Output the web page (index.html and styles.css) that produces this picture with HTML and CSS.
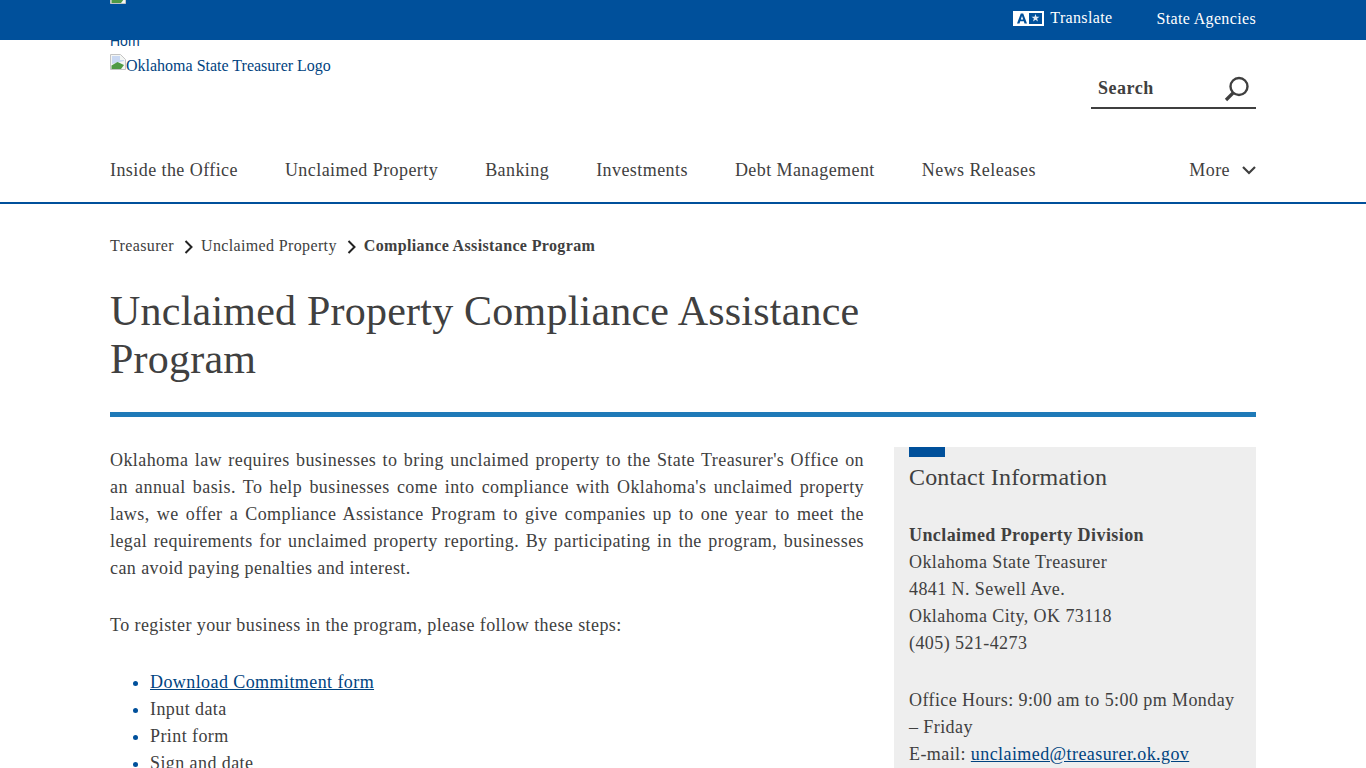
FILE: index.html
```html
<!DOCTYPE html>
<html lang="en">
<head>
<meta charset="utf-8">
<title>Unclaimed Property Compliance Assistance Program</title>
<link rel="stylesheet" href="styles.css">
</head>
<body>
<div class="page">
  <div class="topbar">
    <div class="wrap topbar-in">
      <svg class="broken top-broken" viewBox="0 0 16 16"><path d="M.5.5h10l5 5v10H.5z" fill="#f4f6f4" stroke="#c4c4c4"/><path d="M2 2h8v4h4v1L2 10z" fill="#c9d8f2"/><path d="M1.500 15v-3.500l6-3.500 6.500 3-3 4z" fill="#4f9a45"/></svg>
      <div class="top-links">
        <a class="tl translate" href="#">
          <svg class="t-icon" viewBox="0 0 31 15"><path d="M0 0h31v15H0z" fill="#fff"/><path d="M16 2h13v11H16z" fill="#00509b"/><path d="M4 12.500l3.800-10h2.400l3.800 10h-2.500l-.7-2.200H7.200l-.7 2.200zM7.800 8.500h2.400L9 5z" fill="#00509b"/><path d="M22.500 3l1 2.700h3l-2.400 1.800.9 3-2.500-1.800-2.500 1.800.9-3-2.400-1.800h3z" fill="#dfe8f3"/></svg>
          <span>Translate</span>
        </a>
        <a class="tl agencies" href="#">State Agencies</a>
      </div>
    </div>
  </div>
  <header class="wrap masthead">
    <a class="home" href="#">Home</a>
    <div class="brand-row">
      <a class="logo" href="#"><svg class="broken logo-broken" viewBox="0 0 16 16"><path d="M.5.5h10l5 5v10H.5z" fill="#f4f6f4" stroke="#c4c4c4"/><path d="M2 2h8v4h4v1L2 10z" fill="#c9d8f2"/><path d="M1.500 15v-3.500l6-3.500 6.500 3-3 4z" fill="#4f9a45"/></svg>Oklahoma State Treasurer Logo</a>
      <div class="search">
        <span>Search</span>
        <svg class="search-icon" viewBox="0 0 26 26"><circle cx="15" cy="10.500" r="8.500" fill="none" stroke="#3f3f3f" stroke-width="2.400"/><path d="M9 17l-7 7" stroke="#3f3f3f" stroke-width="3.200" fill="none"/></svg>
      </div>
    </div>
  </header>
  <nav class="mainnav">
    <div class="wrap nav-in">
      <a href="#">Inside the Office</a>
      <a href="#">Unclaimed Property</a>
      <a href="#">Banking</a>
      <a href="#">Investments</a>
      <a href="#">Debt Management</a>
      <a href="#">News Releases</a>
      <a class="more" href="#">More <svg class="more-icon" viewBox="0 0 14 9"><path d="M1 1l6 6 6-6" fill="none" stroke="#3f3f3f" stroke-width="2.200"/></svg></a>
    </div>
  </nav>
  <main class="wrap">
    <div class="crumbs">
      <a href="#">Treasurer</a>
      <svg class="chev" viewBox="0 0 9 14"><path d="M1.500 1l6 6-6 6" fill="none" stroke="#222" stroke-width="2"/></svg>
      <a href="#">Unclaimed Property</a>
      <svg class="chev" viewBox="0 0 9 14"><path d="M1.500 1l6 6-6 6" fill="none" stroke="#222" stroke-width="2"/></svg>
      <b>Compliance Assistance Program</b>
    </div>
    <h1>Unclaimed Property Compliance Assistance Program</h1>
    <div class="columns">
      <article class="body-col">
        <p>Oklahoma law requires businesses to bring unclaimed property to the State Treasurer's Office on an annual basis. To help businesses come into compliance with Oklahoma's unclaimed property laws, we offer a Compliance Assistance Program to give companies up to one year to meet the legal requirements for unclaimed property reporting. By participating in the program, businesses can avoid paying penalties and interest.</p>
        <p>To register your business in the program, please follow these steps:</p>
        <ul>
          <li><a href="#">Download Commitment form</a></li>
          <li>Input data</li>
          <li>Print form</li>
          <li>Sign and date</li>
        </ul>
      </article>
      <aside class="contact">
        <div class="tab"></div>
        <h2>Contact Information</h2>
        <p><b>Unclaimed Property Division</b><br>Oklahoma State Treasurer<br>4841 N. Sewell Ave.<br>Oklahoma City, OK 73118<br>(405) 521-4273</p>
        <p>Office Hours: 9:00 am to 5:00 pm Monday – Friday<br>E-mail: <a href="#">unclaimed@treasurer.ok.gov</a></p>
      </aside>
    </div>
  </main>
</div>
</body>
</html>
```
FILE: styles.css
```css
* { box-sizing: border-box; }
html, body { margin: 0; padding: 0; }
body {
  font-family: "Liberation Serif", "Times New Roman", serif;
  font-size: 18px;
  line-height: 27px;
  color: #404040;
  letter-spacing: .42px;
  background: #fff;
}
a { color: #00437f; }
.page { height: 768px; overflow: hidden; }
.wrap { width: 1146px; margin: 0 auto; }
.topbar { height: 40px; background: #00509b; position: relative; z-index: 2; }
.topbar-in { display: flex; justify-content: space-between; height: 40px; }
.broken { width: 16px; height: 16px; display: inline-block; }
.top-broken { margin-top: -12px; }
.top-links { display: flex; align-items: flex-start; padding-top: 4px; }
.tl { color: #fff; text-decoration: none; font-size: 16px; letter-spacing: .35px; line-height: 27px; }
.translate { display: flex; align-items: flex-start; gap: 6px; margin-right: 44px; }
.agencies { padding-top: 1px; }
.t-icon { width: 31px; height: 15px; margin-top: 7px; }
.masthead { height: 107px; }
.home { display: block; width: 30px; height: 13px; margin-top: -7px; overflow: hidden; font-family: "Liberation Sans", sans-serif; font-size: 14px; line-height: 16px; letter-spacing: 0; text-decoration: none; position: relative; z-index: 1; color: #00437f; }
.brand-row { display: flex; justify-content: space-between; align-items: flex-start; padding-top: 1px; }
.logo { font-size: 16px; line-height: 18px; margin-top: 7px; letter-spacing: 0; text-decoration: none; display: block; color: #00437f; }
.logo-broken { vertical-align: 1px; }
.search { width: 165px; height: 42px; margin-top: 20px; border-bottom: 2px solid #3f3f3f; display: flex; justify-content: space-between; align-items: flex-start; padding: 8px 0 0 7px; font-weight: 700; letter-spacing: .5px; }
.search-icon { width: 26px; height: 26px; margin: 1px 6px 0 0; }
.mainnav { height: 64px; border-bottom: 2px solid #00509b; }
.nav-in { display: flex; gap: 47px; padding-top: 17px; letter-spacing: .43px; }
.nav-in a { color: #404040; text-decoration: none; }
.nav-in .more { margin-left: auto; display: flex; align-items: center; gap: 12px; }
.more-icon { width: 14px; height: 9px; }
main { display: block; }
.crumbs { display: flex; align-items: center; padding-top: 28px; font-size: 16px; line-height: 27px; letter-spacing: .36px; }
.crumbs a { color: #404040; text-decoration: none; }
.chev { width: 9px; height: 14px; margin: 2px 8px 0 10px; }
h1 { font-weight: 400; font-size: 42px; line-height: 48px; letter-spacing: .22px; margin: 28px 0 0; width: 800px; padding-bottom: 29px; }
.columns { border-top: 5px solid #1f7ab8; display: flex; justify-content: space-between; padding-top: 30px; align-items: flex-start; }
.body-col { width: 754px; text-align: justify; }
.body-col p { margin: 0 0 30px; }
ul { margin: 0; padding: 0 0 0 40px; text-align: left; }
li::marker { color: #00509b; }
.contact { width: 362px; height: 400px; background: #eee; padding: 0 15px; }
.tab { width: 36px; height: 10px; background: #00509b; }
h2 { font-weight: 400; font-size: 24px; line-height: 30px; letter-spacing: .15px; margin: 5px 0 30px; }
.contact p { margin: 0 0 30px; }
```
